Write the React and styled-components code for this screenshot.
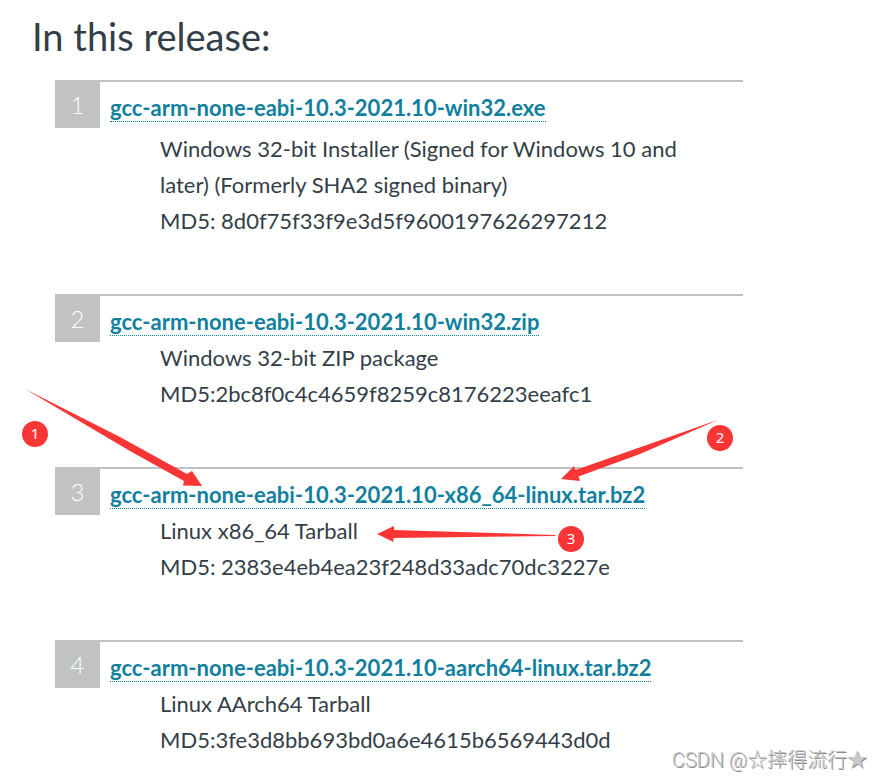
import styled, { createGlobalStyle } from "styled-components";

const GlobalStyle = createGlobalStyle`
  * {
    box-sizing: border-box;
  }

  body {
    margin: 0;
    background-color: #ffffff;
    color: #333e48;
    font-family: Lato, "Noto Sans CJK SC", sans-serif;
  }
`;

const Page = styled.main`
  position: relative;
  padding: 8px 139px 21px 32px;
`;

const Title = styled.h1`
  margin: 0;
  font-size: 38px;
  font-weight: 400;
  line-height: 56px;
`;

const ReleaseList = styled.ol`
  margin: 16px 0 0 23px;
  padding: 0;
  list-style: none;
  display: flex;
  flex-direction: column;
  gap: 55px;
`;

const Release = styled.li`
  display: grid;
  grid-template-columns: 45px 1fr;
  column-gap: 10px;
  align-items: start;
  background: linear-gradient(#c1c2c2, #c1c2c2) no-repeat top / 100% 2px;
`;

const Number = styled.span`
  height: 48px;
  margin-bottom: -2px;
  background-color: #c1c2c2;
  color: #ffffff;
  font-size: 24px;
  font-weight: 300;
  line-height: 50px;
  text-align: center;
`;

const FileName = styled.h2`
  margin: 0;
  padding-top: 10px;
  font-size: 22px;
  font-weight: 700;
  line-height: 36px;
`;

const FileLink = styled.a`
  border-bottom: 1px dotted #11809f;
  color: #11809f;
  text-decoration: none;
`;

const Details = styled.div`
  grid-column: 2;
  padding: ${({ $spaced }) => ($spaced ? "5px" : "0")} 50px 0 50px;
  font-size: 22px;
  line-height: 36px;

  p {
    margin: 0;
  }
`;

const Arrows = styled.svg`
  position: absolute;
  top: 0;
  left: 0;
  pointer-events: none;
`;

const Marker = styled.span`
  position: absolute;
  top: ${({ $top }) => $top}px;
  left: ${({ $left }) => $left}px;
  width: 26px;
  height: 26px;
  border-radius: 50%;
  background-color: #fa3535;
  color: #ffffff;
  font-family: "Noto Sans", sans-serif;
  font-size: 15px;
  line-height: 24px;
  text-align: center;
`;

const Watermark = styled.span`
  position: absolute;
  right: 15px;
  bottom: 4px;
  color: #c8c8c8;
  font-family: Roboto, "Noto Sans CJK SC", sans-serif;
  font-size: 20px;
  font-weight: 300;
  line-height: 30px;
  text-shadow: 1px 1px 0 #8c8c8c;
`;

const releases = [
  {
    file: "gcc-arm-none-eabi-10.3-2021.10-win32.exe",
    about: "Windows 32-bit Installer (Signed for Windows 10 and later) (Formerly SHA2 signed binary)",
    md5: "MD5: 8d0f75f33f9e3d5f9600197626297212",
    spaced: true,
  },
  {
    file: "gcc-arm-none-eabi-10.3-2021.10-win32.zip",
    about: "Windows 32-bit ZIP package",
    md5: "MD5:2bc8f0c4c4659f8259c8176223eeafc1",
  },
  {
    file: "gcc-arm-none-eabi-10.3-2021.10-x86_64-linux.tar.bz2",
    about: "Linux x86_64 Tarball",
    md5: "MD5: 2383e4eb4ea23f248d33adc70dc3227e",
  },
  {
    file: "gcc-arm-none-eabi-10.3-2021.10-aarch64-linux.tar.bz2",
    about: "Linux AArch64 Tarball",
    md5: "MD5:3fe3d8bb693bd0a6e4615b6569443d0d",
  },
];

const markers = [
  { label: 1, left: 22, top: 421 },
  { label: 2, left: 707, top: 425 },
  { label: 3, left: 558, top: 526 },
];

const App = () => {
  return (
    <Page>
      <GlobalStyle />
      <Title>In this release:</Title>
      <ReleaseList>
        {releases.map(({ file, about, md5, spaced }, index) => (
          <Release key={file}>
            <Number>{index + 1}</Number>
            <FileName>
              <FileLink href="#">{file}</FileLink>
            </FileName>
            <Details $spaced={spaced}>
              <p>{about}</p>
              <p>{md5}</p>
            </Details>
          </Release>
        ))}
      </ReleaseList>
      <Arrows width="760" height="560" fill="#fa3535" aria-hidden="true">
        <path d="M25 389 L120 437 L187 474 L192 471 L202 486 L183 485.5 L184 481 L130 451 Z" />
        <path d="M719 419.5 L640 454 L578.5 476.5 L580 481 L561 479 L574 466 L575.5 470 Z" />
        <path d="M555 535 L555 536 L393.5 538 L393.5 542 L377 534 L394 526 L394 530 Z" />
      </Arrows>
      {markers.map(({ label, left, top }) => (
        <Marker key={label} $left={left} $top={top}>
          {label}
        </Marker>
      ))}
      <Watermark>CSDN @☆摔得流行★</Watermark>
    </Page>
  );
};

export default App;
